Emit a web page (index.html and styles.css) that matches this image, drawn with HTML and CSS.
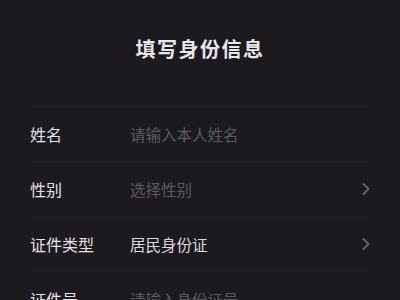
FILE: index.html
```html
<!DOCTYPE html>
<html lang="zh-CN">
<head>
  <meta charset="UTF-8">
  <meta name="viewport" content="width=device-width, initial-scale=1.0">
  <title>填写身份信息</title>
  <link rel="stylesheet" href="styles.css">
</head>
<body>
  <div class="page">
    <div class="header">填写身份信息</div>

    <div class="form">
      <div class="row">
        <span class="label">姓名</span>
        <span class="value placeholder">请输入本人姓名</span>
      </div>
      <div class="row">
        <span class="label">性别</span>
        <span class="value placeholder">选择性别</span>
        <svg class="arrow" width="8" height="14" viewBox="0 0 8 14"><path d="M1.5 2 L6.5 7 L1.5 12" fill="none" stroke="#67666a" stroke-width="1.8" stroke-linecap="round" stroke-linejoin="round"/></svg>
      </div>
      <div class="row">
        <span class="label">证件类型</span>
        <span class="value">居民身份证</span>
        <svg class="arrow" width="8" height="14" viewBox="0 0 8 14"><path d="M1.5 2 L6.5 7 L1.5 12" fill="none" stroke="#67666a" stroke-width="1.8" stroke-linecap="round" stroke-linejoin="round"/></svg>
      </div>
      <div class="row">
        <span class="label">证件号</span>
        <span class="value placeholder">请输入身份证号</span>
      </div>
    </div>
  </div>
</body>
</html>
```

FILE: styles.css
```css
html, body {
  margin: 0;
  padding: 0;
  background-color: #1c1a1e;
}
body {
  font-family: "Noto Sans CJK SC", "Noto Sans", sans-serif;
  color: #e2e1e4;
}
.page {
  width: 400px;
  height: 300px;
  overflow: hidden;
}
.header {
  height: 96px;
  display: flex;
  align-items: center;
  justify-content: center;
  font-size: 20px;
  font-weight: 700;
  color: #e8e7ea;
  letter-spacing: 1.5px;
}
.form {
  margin: 10px 30px 0 30px;
}
.row {
  display: flex;
  align-items: center;
  height: 54px;
  border-top: 1px solid #222025;
}
.label {
  width: 100px;
  font-size: 16px;
  color: #e4e3e6;
}
.value {
  flex: 1;
  font-size: 15.5px;
  color: #dcdbde;
}
.placeholder {
  color: #5c5a5f;
}
.arrow {
  margin-right: 0;
}
```
